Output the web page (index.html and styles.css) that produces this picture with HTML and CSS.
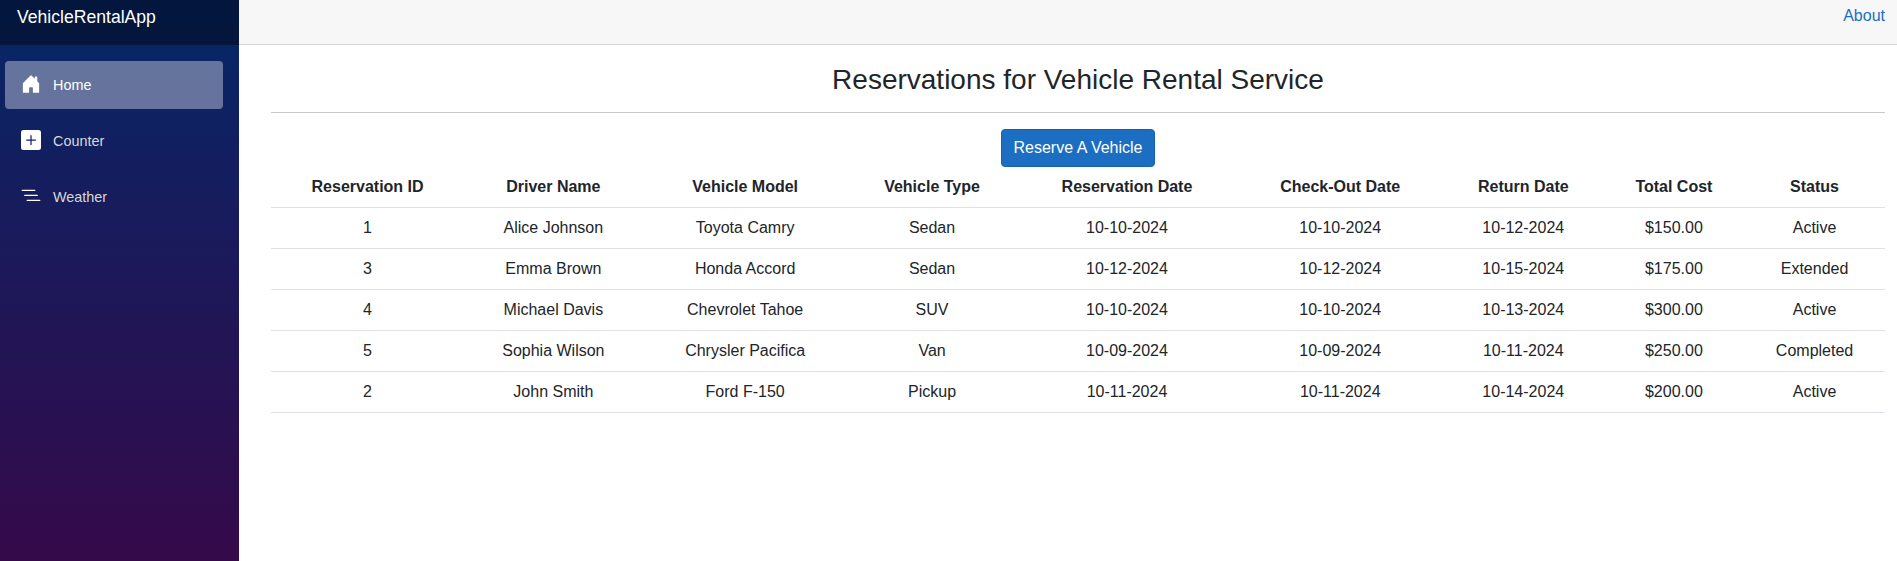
FILE: index.html
```html
<!DOCTYPE html>
<html lang="en">
<head>
<meta charset="utf-8">
<title>VehicleRentalApp</title>
<link rel="stylesheet" href="styles.css">
</head>
<body>
<div class="page">
  <aside class="sidebar">
    <div class="brand-row"><a class="brand" href="#">VehicleRentalApp</a></div>
    <nav class="nav">
      <a class="nav-link active" href="#">
        <svg class="nav-icon" viewBox="0 0 16 16" fill="#fff"><path d="M6.5 14.5v-3.505c0-.245.25-.495.5-.495h2c.25 0 .5.25.5.5v3.5a.5.5 0 0 0 .5.5h4a.5.5 0 0 0 .5-.5v-7a.5.5 0 0 0-.146-.354L13 5.793V2.5a.5.5 0 0 0-.5-.5h-1a.5.5 0 0 0-.5.5v1.293L8.354 1.146a.5.5 0 0 0-.708 0l-6 6A.5.5 0 0 0 1.5 7.5v7a.5.5 0 0 0 .5.5h4a.5.5 0 0 0 .5-.5Z"/></svg>
        Home
      </a>
      <a class="nav-link" href="#">
        <svg class="nav-icon" viewBox="0 0 16 16" fill="#fff"><path d="M2 0a2 2 0 0 0-2 2v12a2 2 0 0 0 2 2h12a2 2 0 0 0 2-2V2a2 2 0 0 0-2-2H2zm6.5 4.5v3h3a.5.5 0 0 1 0 1h-3v3a.5.5 0 0 1-1 0v-3h-3a.5.5 0 0 1 0-1h3v-3a.5.5 0 0 1 1 0z"/></svg>
        Counter
      </a>
      <a class="nav-link" href="#">
        <svg class="nav-icon" viewBox="0 0 16 16" fill="#fff"><path fill-rule="evenodd" d="M4.5 11.5A.5.5 0 0 1 5 11h10a.5.5 0 0 1 0 1H5a.5.5 0 0 1-.5-.5zm-2-4A.5.5 0 0 1 3 7h10a.5.5 0 0 1 0 1H3a.5.5 0 0 1-.5-.5zm-2-4A.5.5 0 0 1 1 3h10a.5.5 0 0 1 0 1H1a.5.5 0 0 1-.5-.5z"/></svg>
        Weather
      </a>
    </nav>
  </aside>
  <main class="main">
    <header class="top-row"><a class="about" href="#">About</a></header>
    <article class="content">
      <h2 class="title">Reservations for Vehicle Rental Service</h2>
      <hr class="rule">
      <button class="btn-reserve" type="button">Reserve A Vehicle</button>
      <table class="table">
        <thead>
          <tr>
            <th>Reservation ID</th><th>Driver Name</th><th>Vehicle Model</th><th>Vehicle Type</th><th>Reservation Date</th><th>Check-Out Date</th><th>Return Date</th><th>Total Cost</th><th>Status</th>
          </tr>
        </thead>
        <tbody>
          <tr><td>1</td><td>Alice Johnson</td><td>Toyota Camry</td><td>Sedan</td><td>10-10-2024</td><td>10-10-2024</td><td>10-12-2024</td><td>$150.00</td><td>Active</td></tr>
          <tr><td>3</td><td>Emma Brown</td><td>Honda Accord</td><td>Sedan</td><td>10-12-2024</td><td>10-12-2024</td><td>10-15-2024</td><td>$175.00</td><td>Extended</td></tr>
          <tr><td>4</td><td>Michael Davis</td><td>Chevrolet Tahoe</td><td>SUV</td><td>10-10-2024</td><td>10-10-2024</td><td>10-13-2024</td><td>$300.00</td><td>Active</td></tr>
          <tr><td>5</td><td>Sophia Wilson</td><td>Chrysler Pacifica</td><td>Van</td><td>10-09-2024</td><td>10-09-2024</td><td>10-11-2024</td><td>$250.00</td><td>Completed</td></tr>
          <tr><td>2</td><td>John Smith</td><td>Ford F-150</td><td>Pickup</td><td>10-11-2024</td><td>10-11-2024</td><td>10-14-2024</td><td>$200.00</td><td>Active</td></tr>
        </tbody>
      </table>
    </article>
  </main>
</div>
</body>
</html>
```
FILE: styles.css
```css
* { box-sizing: border-box; }
html, body { margin: 0; height: 100%; }
body {
  font-family: "Liberation Sans", Arial, sans-serif;
  font-size: 16px;
  line-height: 1.5;
  color: #212529;
  background: #fff;
}
.page { display: flex; min-height: 100vh; }
.sidebar {
  flex: 0 0 239px;
  background-image: linear-gradient(180deg, rgb(5, 39, 103) 0, #3a0647 618px);
}
.brand-row {
  height: 45px;
  padding: 4px 17px 0;
  background: rgba(0, 0, 0, 0.4);
}
.brand { color: #fff; font-size: 17.6px; line-height: 26px; text-decoration: none; }
.nav { display: flex; flex-direction: column; gap: 8px; padding: 16px 16px 0 5px; }
.nav-link {
  display: flex;
  align-items: center;
  height: 48px;
  padding: 2px 0 0 16px;
  border-radius: 4px;
  color: #d7d7d7;
  font-size: 14.4px;
  text-decoration: none;
}
.nav-link.active { background: rgba(255, 255, 255, 0.37); color: #fff; }
.nav-icon { width: 20px; height: 20px; margin: -4px 12px 0 0; flex: none; }
.main { flex: 1; min-width: 0; }
.top-row {
  display: flex;
  justify-content: flex-end;
  height: 45px;
  padding: 4px 12px 0 0;
  background: #f7f7f7;
  border-bottom: 1px solid #d6d5d5;
}
.about { color: #1b6ec2; text-decoration: none; line-height: 24px; }
.content { padding: 18px 12px 0 32px; }
.title {
  margin: 0 0 15px;
  font-size: 28px;
  font-weight: 400;
  line-height: 34px;
  text-align: center;
}
.rule { margin: 0 0 16px; border: 0; border-top: 1px solid #c8c9ca; }
.btn-reserve {
  display: block;
  width: 154px;
  height: 38px;
  margin: 0 auto;
  padding: 6px 0;
  font: inherit;
  color: #fff;
  background: #1b6ec2;
  border: 1px solid #1861ac;
  border-radius: 4px;
}
.table { width: 100%; border-collapse: collapse; }
.table th, .table td {
  padding: 8px;
  text-align: center;
  border-bottom: 1px solid #dee2e6;
}
.table th { font-weight: 700; }
```
